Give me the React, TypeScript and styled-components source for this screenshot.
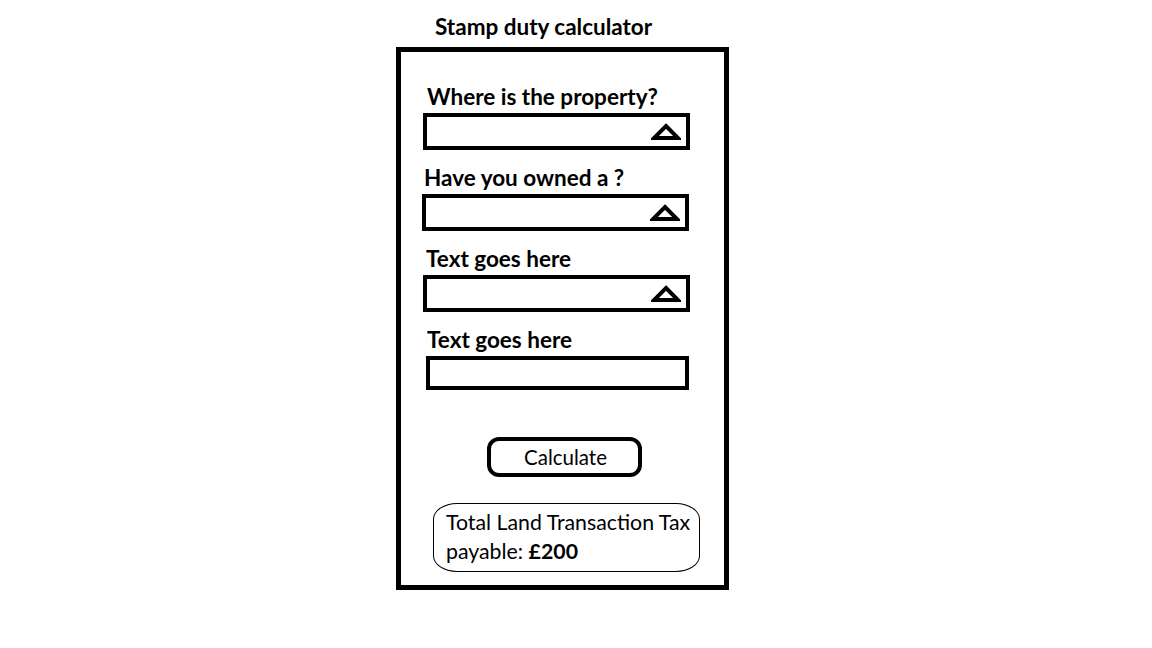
import React from "react";
import styled, { createGlobalStyle } from "styled-components";

const GlobalStyle = createGlobalStyle`
  body {
    margin: 0;
    background: #ffffff;
    font-family: Lato, "Liberation Sans", sans-serif;
    color: #000000;
  }
`;

const Page = styled.div`
  width: 1152px;
  height: 648px;
  padding: 15px 0 0 396px;
  box-sizing: border-box;
  display: flex;
  flex-direction: column;
`;

const Title = styled.div`
  margin-left: 39px;
  font-size: 22.5px;
  font-weight: bold;
  line-height: 24px;
  margin-bottom: 8px;
`;

const Card = styled.div`
  width: 333px;
  height: 543px;
  box-sizing: border-box;
  border: 5px solid #000;
  padding-top: 33px;
  display: flex;
  flex-direction: column;
`;

const Fields = styled.div`
  display: flex;
  flex-direction: column;
  gap: 16px;
`;

const Field = styled.div`
  display: flex;
  flex-direction: column;
  gap: 4px;
`;

const Label = styled.div<{ $indent: number }>`
  margin-left: ${(p) => p.$indent}px;
  font-size: 22.5px;
  font-weight: bold;
  line-height: 24px;
`;

const Select = styled.div<{ $indent: number }>`
  margin-left: ${(p) => p.$indent}px;
  width: 267px;
  height: 37px;
  box-sizing: border-box;
  border: 4px solid #000;
  display: flex;
  align-items: center;
  justify-content: flex-end;
  padding-right: 5px;
`;

const TextInput = styled.div<{ $indent: number }>`
  margin-left: ${(p) => p.$indent}px;
  width: 263px;
  height: 34px;
  box-sizing: border-box;
  border: 4px solid #000;
`;

const Button = styled.div`
  margin: 47px 0 0 86px;
  width: 155px;
  height: 40px;
  box-sizing: border-box;
  border: 4px solid #000;
  border-radius: 12px;
  display: flex;
  align-items: center;
  justify-content: center;
  font-size: 20.5px;
  line-height: 24px;
  padding-left: 2px;
`;

const Result = styled.div`
  margin: 26px 0 0 32px;
  width: 267px;
  height: 69px;
  box-sizing: border-box;
  border: 1px solid #000;
  border-radius: 24px / 16px;
  padding: 4px 0 0 12px;
  font-size: 21.3px;
  line-height: 29px;
`;

const Arrow = () => (
  <svg width="30" height="18" viewBox="0 0 30 18">
    <polygon
      points="15,3 27,15 3,15"
      fill="#fff"
      stroke="#000"
      strokeWidth="4"
      strokeLinejoin="miter"
    />
  </svg>
);

const App: React.FC = () => {
  return (
    <Page>
      <GlobalStyle />
      <Title>Stamp duty calculator</Title>
      <Card>
        <Fields>
          <Field>
            <Label $indent={26}>Where is the property?</Label>
            <Select $indent={22}>
              <Arrow />
            </Select>
          </Field>
          <Field>
            <Label $indent={23}>Have you owned a ?</Label>
            <Select $indent={21}>
              <Arrow />
            </Select>
          </Field>
          <Field>
            <Label $indent={25}>Text goes here</Label>
            <Select $indent={22}>
              <Arrow />
            </Select>
          </Field>
          <Field>
            <Label $indent={26}>Text goes here</Label>
            <TextInput $indent={25} />
          </Field>
        </Fields>
        <Button>Calculate</Button>
        <Result>
          Total Land Transaction Tax
          <br />
          payable: <b>£200</b>
        </Result>
      </Card>
    </Page>
  );
};

export default App;
